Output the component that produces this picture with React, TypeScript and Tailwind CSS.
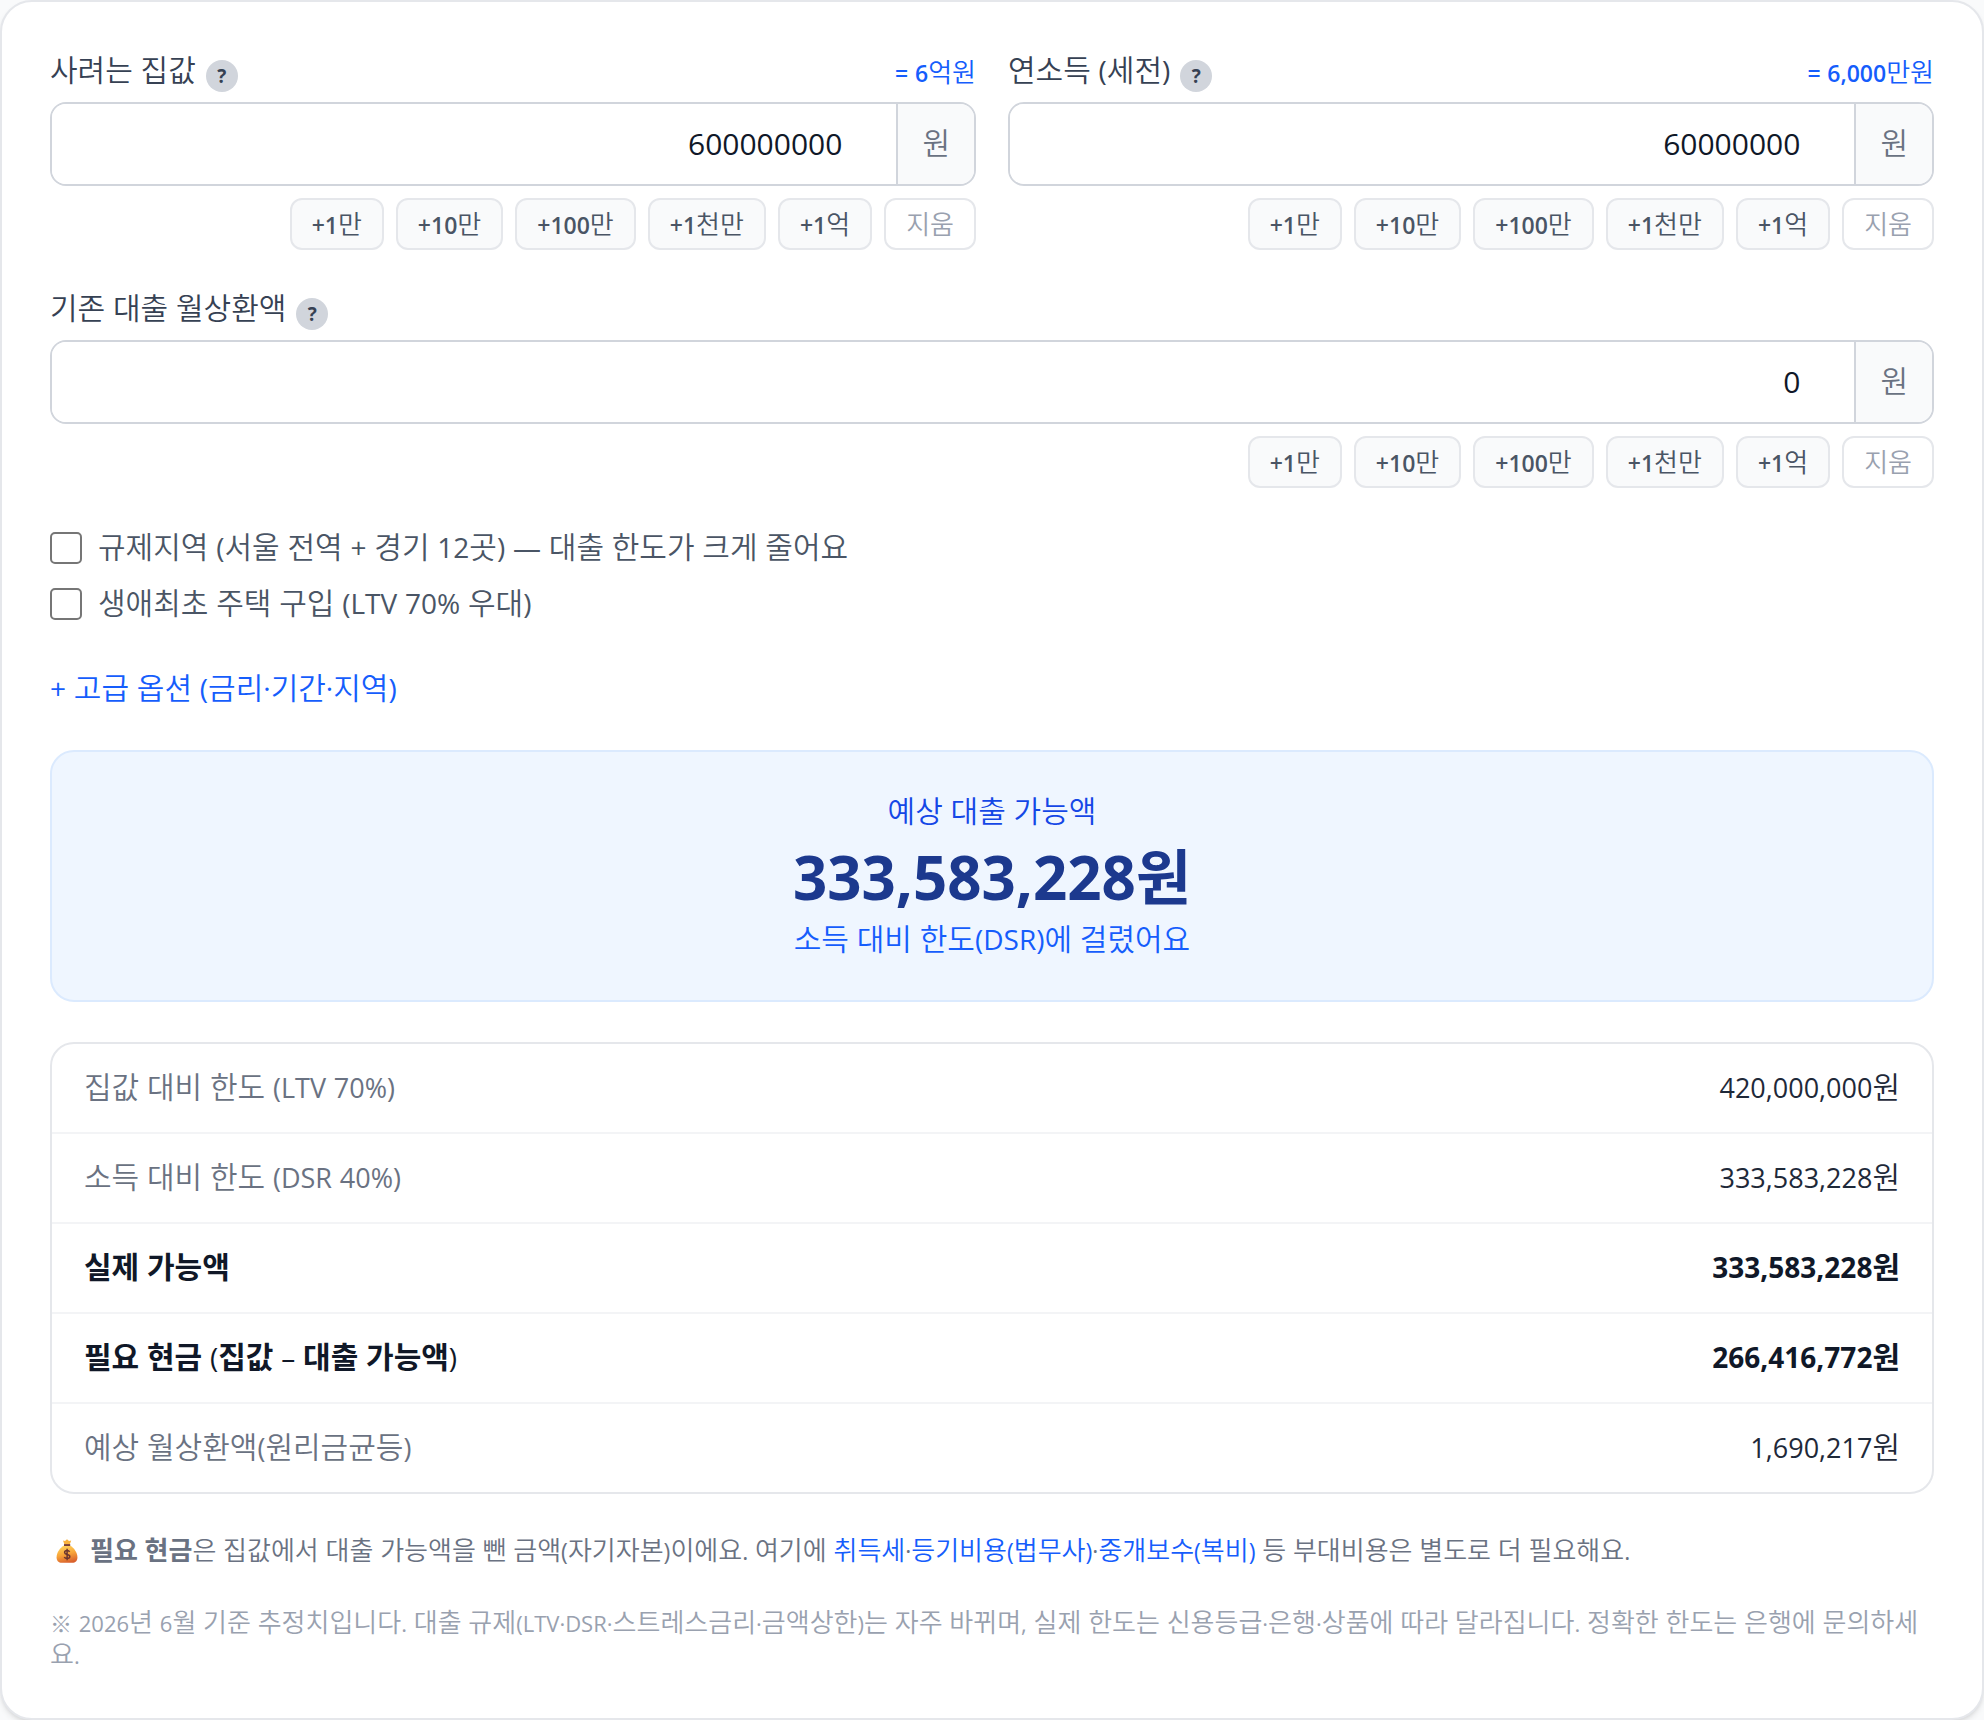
import { useState } from "react";

const latinSizes = {
  xs: "text-[22px]",
  sm: "text-[23px]",
  md: "text-[27px]",
  lg: "text-[28px]",
};

/** Sets Latin runs a little smaller than the Hangul around them, so both look equally tall. */
function Mixed({
  text,
  size,
  latin = "font-normal",
}: {
  text: string;
  size: keyof typeof latinSizes;
  latin?: string;
}) {
  const parts = text.split(/([^가-힣\s]+)/);
  return (
    <>
      {parts.map((part, i) =>
        i % 2 === 1 ? (
          <span key={i} className={`${latinSizes[size]} ${latin} leading-none`}>
            {part}
          </span>
        ) : (
          part
        ),
      )}
    </>
  );
}

const steps = [
  { label: "+1만", amount: 10000 },
  { label: "+10만", amount: 100000 },
  { label: "+100만", amount: 1000000 },
  { label: "+1천만", amount: 10000000 },
  { label: "+1억", amount: 100000000 },
];

function MoneyField({ id, label, hint, initial }: { id: string; label: string; hint?: string; initial: string }) {
  const [value, setValue] = useState(initial);
  return (
    <div className="min-w-0">
      <div className="mb-2.5 flex items-start justify-between">
        <div className="flex items-start gap-2.5">
          <label htmlFor={id} className="text-[30px] leading-10 text-gray-700">
            <Mixed text={label} size="lg" />
          </label>
          <button
            type="button"
            aria-label={`${label} 도움말`}
            className="mt-2.5 flex size-8 items-center justify-center rounded-full bg-gray-300 text-[19px] leading-none font-bold text-gray-700"
          >
            ?
          </button>
        </div>
        {hint && (
          <span className="mt-1.5 text-[26px] leading-8 text-blue-600">
            <Mixed text={hint} size="sm" latin="font-semibold" />
          </span>
        )}
      </div>
      <div className="flex h-21 overflow-hidden rounded-2xl border-2 border-gray-300 bg-white">
        <input
          id={id}
          type="text"
          inputMode="numeric"
          value={value}
          onChange={(e) => setValue(e.target.value)}
          className="min-w-0 flex-1 bg-white pr-[54px] pb-0.5 pl-6 text-right text-[30px] font-normal text-gray-900 outline-none"
        />
        <span className="flex items-center border-l-2 border-gray-300 bg-gray-50 px-6 pb-0.5 text-[30px] leading-10 text-gray-500">
          원
        </span>
      </div>
      <div className="mt-3 flex justify-end gap-3">
        {steps.map((s) => (
          <button
            key={s.label}
            type="button"
            onClick={() => setValue(String(Number(value || 0) + s.amount))}
            className="h-13 rounded-xl border-2 border-gray-200 bg-gray-50 px-5 text-[26px] leading-8 text-gray-600"
          >
            <Mixed text={s.label} size="sm" latin="font-semibold" />
          </button>
        ))}
        <button
          type="button"
          onClick={() => setValue("0")}
          className="h-13 rounded-xl border-2 border-gray-200 bg-white px-5 text-[26px] leading-8 text-gray-400"
        >
          지움
        </button>
      </div>
    </div>
  );
}

function CheckRow({ label }: { label: string }) {
  return (
    <label className="flex items-center gap-4 text-[30px] leading-[38px] text-gray-600">
      <input
        type="checkbox"
        className="size-8 shrink-0 appearance-none rounded-[5px] border-2 border-[#767676] bg-white checked:bg-blue-600"
      />
      <span className="pb-0.5">
        <Mixed text={label} size="lg" />
      </span>
    </label>
  );
}

function MoneyBag() {
  return (
    <svg viewBox="0 0 22 24" width="22" height="24" className="mr-3 ml-1.5 inline-block align-[-3px]" aria-hidden="true">
      <defs>
        <linearGradient id="bag" x1="0.3" y1="0" x2="0.6" y2="1">
          <stop offset="0" stopColor="#ffd45c" />
          <stop offset="0.5" stopColor="#f8a63a" />
          <stop offset="1" stopColor="#d95f2b" />
        </linearGradient>
      </defs>
      <path d="M7 1.5 9 2 11 .3 13 2l2.2-.5L13.6 6H8.6Z" fill="#f9b23c" />
      <path d="M8.4 6.2C4 8.600 .6 13.500 .6 18.200c0 4 2.200 5.500 5 5.500h10.800c2.800 0 5-1.500 5-5.500 0-4.700-3.400-9.600-7.800-12Z" fill="url(#bag)" />
      <path d="M8 5.100h6.200v1.900H8Z" fill="#7a4038" />
      <path
        d="M13.600 12.800c-.5-.9-1.400-1.200-2.500-1.200-1.400 0-2.500.7-2.500 1.900 0 2.700 5.200 1.200 5.200 4 0 1.300-1.200 2-2.700 2-1.300 0-2.300-.5-2.800-1.500M11.100 9.800v11.500"
        fill="none"
        stroke="#6b3630"
        strokeWidth="1.500"
      />
    </svg>
  );
}

const rows = [
  { label: "집값 대비 한도 (LTV 70%)", value: "420,000,000원" },
  { label: "소득 대비 한도 (DSR 40%)", value: "333,583,228원" },
  { label: "실제 가능액", value: "333,583,228원", strong: true },
  { label: "필요 현금 (집값 – 대출 가능액)", value: "266,416,772원", strong: true },
  { label: "예상 월상환액(원리금균등)", value: "1,690,217원" },
];

export default function App() {
  return (
    <div className="bg-gray-50 font-['Open_Sans','Noto_Sans_CJK_KR',sans-serif] font-[350]">
      <main className="rounded-[32px] border-2 border-gray-200 bg-white p-12 shadow-md">
        <div className="grid grid-cols-2 gap-8">
          <MoneyField id="price" label="사려는 집값" hint="= 6억원" initial="600000000" />
          <MoneyField id="income" label="연소득 (세전)" hint="= 6,000만원" initial="60000000" />
        </div>
        <div className="mt-[38px]">
          <MoneyField id="debt" label="기존 대출 월상환액" initial="0" />
        </div>

        <div className="mt-10 flex flex-col items-start gap-4">
          <CheckRow label="규제지역 (서울 전역 + 경기 12곳) — 대출 한도가 크게 줄어요" />
          <CheckRow label="생애최초 주택 구입 (LTV 70% 우대)" />
        </div>

        <button type="button" className="mt-11 block text-[30px] leading-10 text-blue-600">
          <Mixed text="+ 고급 옵션 (금리·기간·지역)" size="lg" latin="font-medium" />
        </button>

        <section className="mt-[42px] rounded-3xl border-2 border-blue-100 bg-blue-50 px-10 pt-[39px] pb-[41px] text-center">
          <p className="text-[30px] leading-10 text-blue-700">예상 대출 가능액</p>
          <p className="mt-2.5 text-[60px] leading-[72px] font-bold text-blue-900">333,583,228원</p>
          <p className="mt-1.5 text-[30px] leading-10 text-blue-600">
            <Mixed text="소득 대비 한도(DSR)에 걸렸어요" size="lg" />
          </p>
        </section>

        <div className="mt-10 overflow-hidden rounded-3xl border-2 border-gray-200">
          <table className="w-full text-[30px] leading-10">
            <tbody className="divide-y-2 divide-gray-100">
              {rows.map((r) => (
                <tr key={r.label} className={r.strong ? "font-bold text-gray-900" : "text-gray-800"}>
                  <th
                    scope="row"
                    className={
                      r.strong
                        ? "px-8 pt-[23px] pb-[25px] text-left font-bold"
                        : "px-8 pt-[23px] pb-[25px] text-left font-[350] text-gray-500"
                    }
                  >
                    <Mixed text={r.label} size={r.strong ? "lg" : "md"} latin={r.strong ? "font-medium" : "font-normal"} />
                  </th>
                  <td className="px-8 pt-[23px] pb-[25px] text-right">
                    <Mixed text={r.value} size={r.strong ? "lg" : "md"} latin={r.strong ? "font-bold" : "font-normal"} />
                  </td>
                </tr>
              ))}
            </tbody>
          </table>
        </div>

        <p className="mt-9 text-[26px] leading-10 text-gray-500">
          <MoneyBag />
          <strong className="font-bold">필요 현금</strong>
          <Mixed text="은 집값에서 대출 가능액을 뺀 금액(자기자본)이에요. 여기에 " size="sm" />
          <a href="#tax" className="text-blue-600">
            취득세
          </a>
          <Mixed text="·" size="sm" />
          <a href="#registration" className="text-blue-600">
            <Mixed text="등기비용(법무사)" size="sm" />
          </a>
          <Mixed text="·" size="sm" />
          <a href="#brokerage" className="text-blue-600">
            <Mixed text="중개보수(복비)" size="sm" />
          </a>
          <Mixed text=" 등 부대비용은 별도로 더 필요해요." size="sm" />
        </p>
        <p className="mt-9 text-[26px] leading-8 text-gray-400">
          <Mixed
            text="※ 2026년 6월 기준 추정치입니다. 대출 규제(LTV·DSR·스트레스금리·금액상한)는 자주 바뀌며, 실제 한도는 신용등급·은행·상품에 따라 달라집니다. 정확한 한도는 은행에 문의하세요."
            size="xs"
          />
        </p>
      </main>
    </div>
  );
}
